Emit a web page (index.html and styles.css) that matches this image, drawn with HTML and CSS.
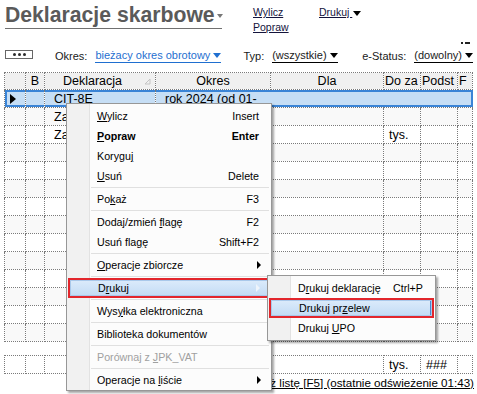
FILE: index.html
```html
<!DOCTYPE html>
<html lang="pl">
<head>
  <meta charset="UTF-8" />
  <title>Deklaracje skarbowe</title>
  <link rel="stylesheet" href="styles.css">
</head>
<body>
  <div class="page">

    <!-- Header: title + actions -->
    <div class="topbar">
      <div class="title"><span>Deklaracje skarbowe</span><span class="caret title-caret"></span></div>
      <div class="actions">
        <a class="act">Wylicz</a>
        <a class="act">Drukuj <span class="caret"></span></a>
        <a class="act">Popraw</a>
      </div>
    </div>

    <!-- Filters -->
    <div class="filters">
      <span class="more-btn"><i></i><i></i><i></i></span>
      <span class="lbl">Okres:</span>
      <span class="pick w-okres"><span class="pick-u blue">bieżacy okres obrotowy<span class="caret"></span></span></span>
      <span class="lbl">Typ:</span>
      <span class="pick w-typ"><span class="pick-u">(wszystkie)<span class="caret"></span></span></span>
      <span class="lbl">e-Status:</span>
      <span class="pick"><span class="pick-u">(dowolny)<span class="caret"></span><span class="mark"><i></i><b></b></span></span></span>
    </div>

    <!-- Grid -->
    <table class="grid main-grid">
      <colgroup>
        <col class="c-ind"><col class="c-b"><col class="c-dek"><col class="c-okr">
        <col class="c-dla"><col class="c-doza"><col class="c-pod"><col class="c-f">
      </colgroup>
      <thead>
        <tr>
          <th></th>
          <th>B</th>
          <th class="th-dek">Deklaracja<svg class="sort-ic" width="7" height="7" viewBox="0 0 7 7"><path d="M6 1 L6 6 L1 6 Z" fill="none" stroke="#c4c4c4" stroke-width="1"/></svg></th>
          <th>Okres</th>
          <th>Dla</th>
          <th class="l">Do za</th>
          <th class="l">Podst</th>
          <th class="l">F</th>
        </tr>
      </thead>
      <tbody>
        <tr class="sel">
          <td class="ind"><span class="row-ptr"></span></td><td></td><td>CIT-8E</td><td>rok 2024 (od 01-</td>
          <td></td><td></td><td></td><td></td>
        </tr>
        <tr><td></td><td></td><td>Za</td><td></td><td></td><td></td><td></td><td></td></tr>
        <tr><td></td><td></td><td>Za</td><td></td><td></td><td class="num">tys.</td><td></td><td></td></tr>
        <tr><td></td><td></td><td></td><td></td><td></td><td></td><td></td><td></td></tr>
        <tr><td></td><td></td><td></td><td></td><td></td><td></td><td></td><td></td></tr>
        <tr><td></td><td></td><td></td><td></td><td></td><td></td><td></td><td></td></tr>
        <tr><td></td><td></td><td></td><td></td><td></td><td></td><td></td><td></td></tr>
        <tr><td></td><td></td><td></td><td></td><td></td><td></td><td></td><td></td></tr>
        <tr><td></td><td></td><td></td><td></td><td></td><td></td><td></td><td></td></tr>
        <tr><td></td><td></td><td></td><td></td><td></td><td></td><td></td><td></td></tr>
        <tr><td></td><td></td><td></td><td></td><td></td><td></td><td></td><td></td></tr>
        <tr><td></td><td></td><td></td><td></td><td></td><td></td><td></td><td></td></tr>
        <tr><td></td><td></td><td></td><td></td><td></td><td></td><td></td><td></td></tr>
        <tr><td></td><td></td><td></td><td></td><td></td><td></td><td></td><td></td></tr>
      </tbody>
    </table>

    <!-- Totals row -->
    <table class="grid totals">
      <colgroup>
        <col class="c-ind"><col class="c-b"><col class="c-dek"><col class="c-okr">
        <col class="c-dla"><col class="c-doza"><col class="c-pod"><col class="c-f">
      </colgroup>
      <tr><td></td><td></td><td></td><td></td><td></td><td class="num">tys.</td><td class="num">###</td><td></td></tr>
    </table>

    <div class="status"><a>Odśwież listę [F5] (ostatnie odświeżenie 01:43)</a></div>

    <!-- Context menu -->
    <div class="menu main-menu">
      <div class="item"><span><u>W</u>ylicz</span><span>Insert</span></div>
      <div class="item bold"><span><u>P</u>opraw</span><span>Enter</span></div>
      <div class="item"><span>Korygu<u>j</u></span><span></span></div>
      <div class="item"><span><u>U</u>suń</span><span>Delete</span></div>
      <div class="sep"></div>
      <div class="item"><span>Po<u>k</u>aż</span><span>F3</span></div>
      <div class="sep"></div>
      <div class="item"><span>Dodaj/zmień <u>f</u>lagę</span><span>F2</span></div>
      <div class="item"><span>Usuń fla<u>g</u>ę</span><span>Shift+F2</span></div>
      <div class="sep"></div>
      <div class="item"><span><u>O</u>peracje zbiorcze</span><span class="arrow"></span></div>
      <div class="sep"></div>
      <div class="item hl"><span>D<u>r</u>ukuj</span><span class="arrow light"></span></div>
      <div class="sep"></div>
      <div class="item"><span>Wys<u>y</u>łka elektroniczna</span><span></span></div>
      <div class="sep"></div>
      <div class="item"><span>Biblioteka dokumentów</span><span></span></div>
      <div class="sep"></div>
      <div class="item disabled"><span>Porównaj z <u>J</u>PK_VAT</span><span></span></div>
      <div class="sep"></div>
      <div class="item"><span>Operacje na <u>l</u>iście</span><span class="arrow"></span></div>
    </div>

    <!-- Submenu: Drukuj -->
    <div class="menu sub-menu">
      <div class="item"><span>D<u>r</u>ukuj deklarację</span><span>Ctrl+P</span></div>
      <div class="item hl"><span>Drukuj pr<u>z</u>elew</span><span></span></div>
      <div class="item"><span>Drukuj <u>U</u>PO</span><span></span></div>
    </div>

  </div>
</body>
</html>
```

FILE: styles.css
```css
body {
  margin: 0;
  background: #fff;
  color: #000;
  font-family: "Liberation Sans", Arial, sans-serif;
}

.page {
  position: relative;
  width: 477px;
  height: 394px;
  overflow: hidden;
}

/* ---------- header ---------- */
.topbar {
  display: flex;
  align-items: flex-start;
  height: 47px;
  box-sizing: border-box;
  padding: 3px 0 0 5px;
}

.title {
  display: flex;
  align-items: center;
  flex: none;
  width: 217px;
  box-sizing: border-box;
  font-size: 21.2px;
  font-weight: bold;
  line-height: 24px;
  white-space: nowrap;
  color: #5a5a5a;
  border-bottom: 1px solid #707070;
  padding-bottom: 1px;
}

.caret {
  display: inline-block;
  width: 0;
  height: 0;
  border-left: 4px solid transparent;
  border-right: 4px solid transparent;
  border-top: 5px solid currentColor;
  vertical-align: middle;
}

.title-caret {
  flex: none;
  border-left-width: 3.5px;
  border-right-width: 3.5px;
  border-top-width: 4px;
  margin: 2px 0 0 2px;
  color: #777;
}

.actions {
  display: grid;
  grid-template-columns: 66px auto;
  margin: 2px 0 0 31px;
  font-size: 10.5px;
  line-height: 15px;
}

.act {
  justify-self: start;
  color: #14143c;
  text-decoration: underline;
}

.act .caret {
  color: #000;
  margin-left: 1px;
}

/* ---------- filters ---------- */
.filters {
  display: flex;
  align-items: center;
  height: 17px;
  box-sizing: border-box;
  padding: 1px 0 0 5px;
  font-size: 11px;
  color: #1a1a1a;
}

.more-btn {
  display: flex;
  align-items: center;
  justify-content: center;
  gap: 2px;
  width: 28px;
  height: 9px;
  box-sizing: border-box;
  border: 1px solid #666;
  margin: 0 22px 3px 0;
}

.more-btn i {
  width: 3px;
  height: 3px;
  border-radius: 50%;
  background: #2a2a2a;
}

.lbl {
  margin-right: 8px;
}

.pick.w-okres { width: 148px; }
.pick.w-typ { width: 90px; }

.pick-u {
  position: relative;
  display: inline-flex;
  align-items: center;
  gap: 3px;
  line-height: 13px;
  border-bottom: 1px solid #000;
  color: #1a1a1a;
}

.pick-u .caret {
  color: #000;
}

.pick-u.blue {
  color: #1f6fd0;
  border-bottom-color: #1f6fd0;
}

.pick-u.blue .caret {
  color: #1f6fd0;
}

.mark {
  position: absolute;
  top: -7px;
  right: 3px;
  display: flex;
  align-items: center;
  gap: 2px;
}

.mark i {
  width: 2px;
  height: 2px;
  background: #222;
}

.mark b {
  width: 5px;
  height: 2px;
  background: #222;
}

/* ---------- grid ---------- */
.grid {
  margin-left: 4px;
  width: 469px;
  table-layout: fixed;
  border-collapse: collapse;
  font-size: 12.5px;
}

.main-grid {
  margin-top: 8px;
}

.c-ind { width: 21px; }
.c-b { width: 19px; }
.c-dek { width: 111px; }
.c-okr { width: 115px; }
.c-dla { width: 113px; }
.c-doza { width: 37px; }
.c-pod { width: 37px; }
.c-f { width: 15px; }

.grid th,
.grid td {
  border: 1px dotted #7a7a7a;
  padding: 0;
  white-space: nowrap;
  overflow: hidden;
  line-height: 16px;
}

.grid thead tr {
  height: 17px;
}

.grid th {
  background: #f0f0f0;
  font-weight: normal;
  text-align: center;
}

.grid th.l {
  text-align: left;
  padding-left: 1px;
}

.grid th.th-dek {
  position: relative;
  padding-right: 15px;
}

.sort-ic {
  position: absolute;
  right: 4px;
  top: 5px;
}

.grid tbody tr {
  height: 18px;
}

.grid tbody tr:nth-child(even) td {
  background: #f9f9f9;
}

.grid td {
  padding-left: 9px;
}

.grid td.num {
  padding-left: 5px;
}

.grid td.ind {
  padding-left: 5px;
}

.grid tr.sel td {
  background: #c6def5;
  box-shadow: inset 0 2px 0 #3a84d6, inset 0 -2px 0 #3a84d6;
}

.grid tr.sel td:nth-child(n+4) {
  border-left-style: none;
  border-right-style: none;
}

.grid tr.sel td:first-child {
  box-shadow: inset 0 2px 0 #3a84d6, inset 0 -2px 0 #3a84d6, inset 2px 0 0 #3a84d6;
}

.grid tr.sel td:last-child {
  box-shadow: inset 0 2px 0 #3a84d6, inset 0 -2px 0 #3a84d6, inset -2px 0 0 #3a84d6;
}

.row-ptr {
  display: block;
  width: 0;
  height: 0;
  border-left: 6px solid #000;
  border-top: 5px solid transparent;
  border-bottom: 5px solid transparent;
}

.totals {
  margin-top: 13px;
}

.totals tr {
  height: 18px;
}

.status {
  text-align: right;
  padding-right: 3px;
  margin-top: 1px;
  font-size: 11.6px;
  line-height: 16px;
  white-space: nowrap;
}

.status a {
  text-decoration: underline;
}

/* ---------- context menus ---------- */
.menu {
  position: absolute;
  box-sizing: border-box;
  border: 1px solid #979797;
  background: linear-gradient(to right, #f1f1f1 22px, #e2e2e2 22px, #e2e2e2 23px, #fcfcfc 23px);
  box-shadow: 2px 2px 2px rgba(0, 0, 0, 0.35);
  font-size: 10.7px;
  z-index: 2;
}

.main-menu {
  left: 66px;
  top: 103px;
  width: 206px;
  padding: 2px 0 0;
}

.sub-menu {
  left: 267px;
  top: 275px;
  width: 169px;
  padding: 2px 0;
  z-index: 3;
}

.item {
  display: flex;
  align-items: center;
  justify-content: space-between;
  height: 20px;
  box-sizing: border-box;
  padding: 0 12px 0 30px;
}

.item.bold {
  font-weight: bold;
}

.item.disabled {
  color: #a0a0a0;
}

.item.hl {
  margin: 0 1px;
  padding: 0 10px 0 28px;
  border: 2px solid #e2262c;
  background: linear-gradient(#dcebfb, #c2dbf4);
  box-shadow: inset 0 0 0 1px #a9c8ea;
}

.sub-menu .item.hl {
  box-shadow: inset 0 0 0 1px #a9c8ea, inset -2px 0 0 #4a88d2;
}

.sep {
  height: 1px;
  margin: 1px 2px 1px 24px;
  background: #e0e0e0;
}

.arrow {
  width: 0;
  height: 0;
  border-left: 4px solid #000;
  border-top: 4px solid transparent;
  border-bottom: 4px solid transparent;
  margin-right: -2px;
}

.arrow.light {
  border-left-color: #eef4fb;
}
```
